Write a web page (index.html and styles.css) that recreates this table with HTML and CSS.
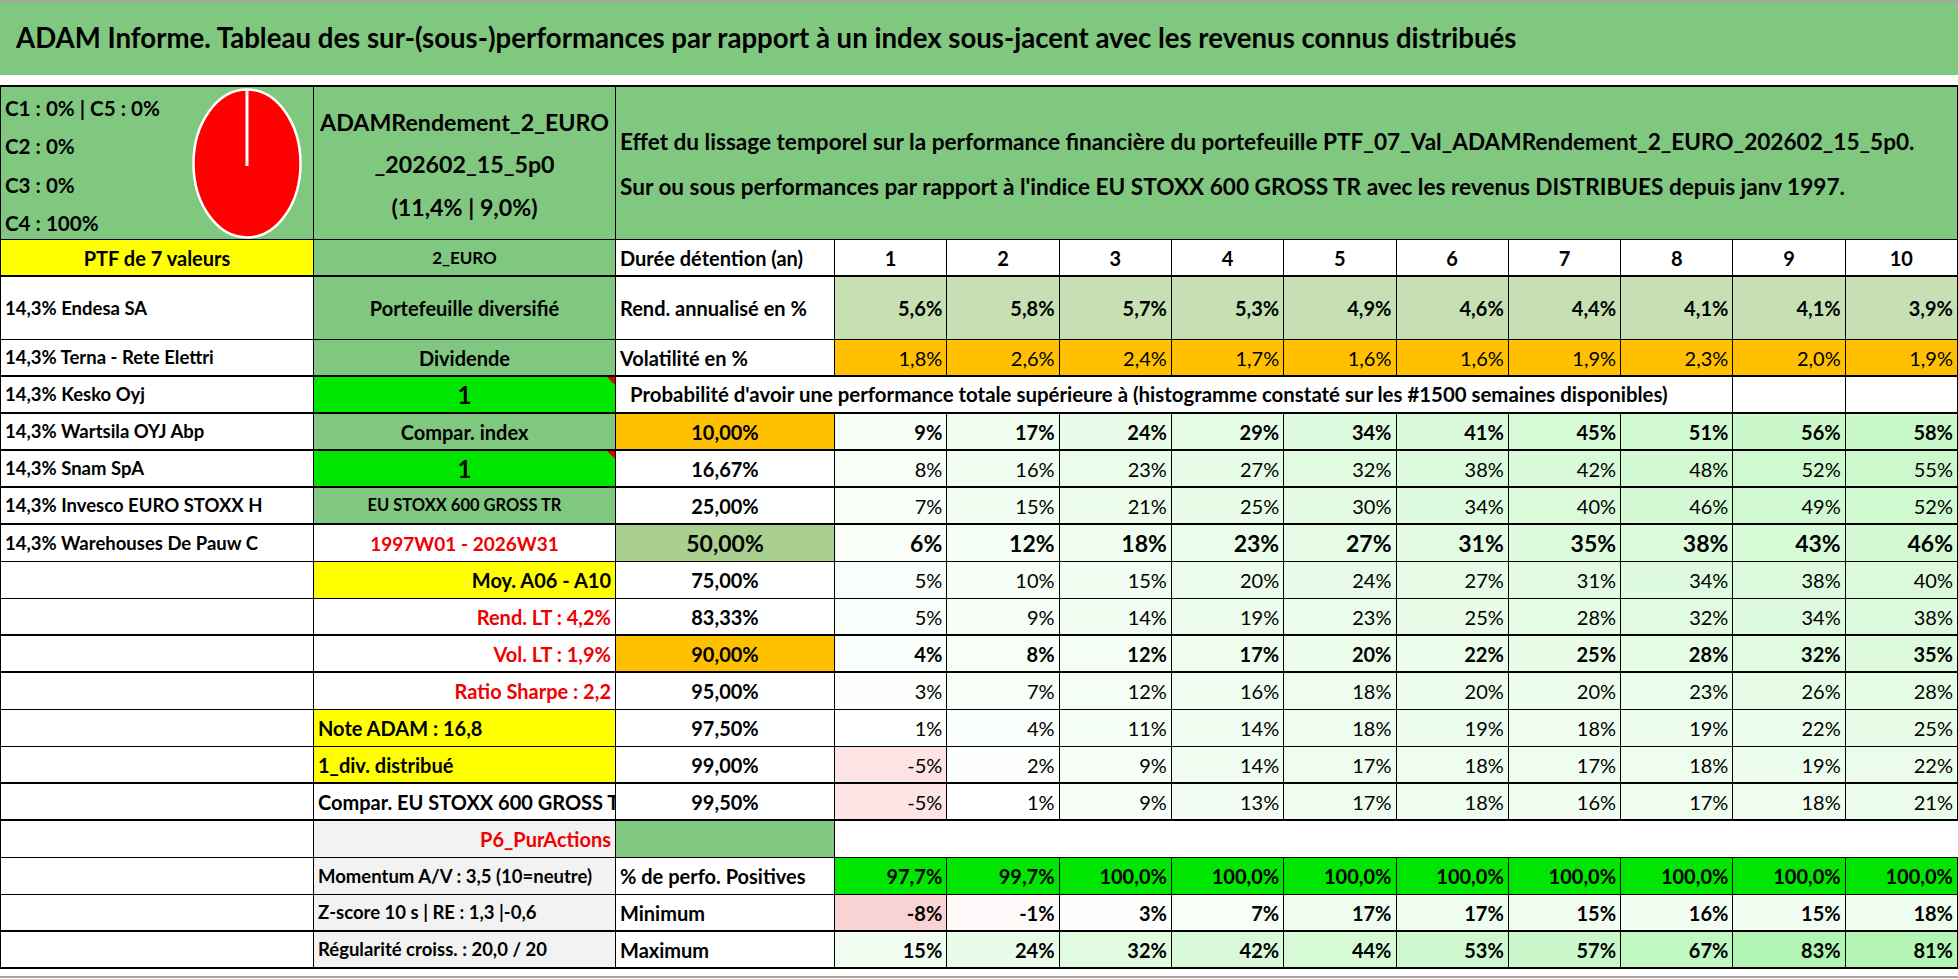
FILE: index.html
```html
<!DOCTYPE html>
<html lang="fr">
<head>
<meta charset="utf-8">
<title>ADAM Informe</title>
<link rel="stylesheet" href="styles.css">
</head>
<body>
<div class="topline"></div>
<header class="title">ADAM Informe. Tableau des sur-(sous-)performances par rapport à un index sous-jacent avec les revenus connus distribués</header>
<div class="gap"></div>
<main class="sheet">
  <div class="row first thin">
    <div class="c green cellA">
      <div class="clist">
        <div>C1 : 0% | C5 : 0%</div>
        <div>C2 : 0%</div>
        <div>C3 : 0%</div>
        <div>C4 : 100%</div>
      </div>
      <svg class="pie" width="110" height="151" viewBox="0 0 110 151">
        <ellipse cx="55" cy="75.5" rx="53.5" ry="74" fill="#ff0000" stroke="#ffffff" stroke-width="2.5"/>
        <line x1="55" y1="78" x2="55" y2="2" stroke="#ffffff" stroke-width="3"/>
      </svg>
    </div>
    <div class="c green name">
      <div>ADAMRendement_2_EURO</div>
      <div>_202602_15_5p0</div>
      <div>(11,4% | 9,0%)</div>
    </div>
    <div class="c green effet span11">
      <div>Effet du lissage temporel sur la performance financière du portefeuille PTF_07_Val_ADAMRendement_2_EURO_202602_15_5p0.</div>
      <div>Sur ou sous performances par rapport à l'indice EU STOXX 600 GROSS TR avec les revenus DISTRIBUES depuis janv 1997.</div>
    </div>
  </div>

  <div class="row head">
    <div class="c m yellow">PTF de 7 valeurs</div>
    <div class="c m green small">2_EURO</div>
    <div class="c l">Durée détention (an)</div>
    <div class="c m">1</div><div class="c m">2</div><div class="c m">3</div><div class="c m">4</div><div class="c m">5</div>
    <div class="c m">6</div><div class="c m">7</div><div class="c m">8</div><div class="c m">9</div><div class="c m">10</div>
  </div>

  <div class="row rend thin">
    <div class="c l a">14,3% Endesa SA</div>
    <div class="c m green">Portefeuille diversifié</div>
    <div class="c l">Rend. annualisé en %</div>
    <div class="c r lg">5,6%</div><div class="c r lg">5,8%</div><div class="c r lg">5,7%</div><div class="c r lg">5,3%</div><div class="c r lg">4,9%</div>
    <div class="c r lg">4,6%</div><div class="c r lg">4,4%</div><div class="c r lg">4,1%</div><div class="c r lg">4,1%</div><div class="c r lg">3,9%</div>
  </div>

  <div class="row lt">
    <div class="c l a">14,3% Terna - Rete Elettri</div>
    <div class="c m green">Dividende</div>
    <div class="c l">Volatilité en %</div>
    <div class="c r orange">1,8%</div><div class="c r orange">2,6%</div><div class="c r orange">2,4%</div><div class="c r orange">1,7%</div><div class="c r orange">1,6%</div>
    <div class="c r orange">1,6%</div><div class="c r orange">1,9%</div><div class="c r orange">2,3%</div><div class="c r orange">2,0%</div><div class="c r orange">1,9%</div>
  </div>

  <div class="row">
    <div class="c l a">14,3% Kesko Oyj</div>
    <div class="c m lime one flag">1</div>
    <div class="c l prob span9">Probabilité d'avoir une performance totale supérieure à (histogramme constaté sur les #1500 semaines disponibles)</div>
    <div class="c"></div>
    <div class="c"></div>
  </div>

  <div class="row">
    <div class="c l a">14,3% Wartsila OYJ Abp</div>
    <div class="c m green">Compar. index</div>
    <div class="c m orange">10,00%</div>
    <div class="c r g" style="--v:9">9%</div><div class="c r g" style="--v:17">17%</div><div class="c r g" style="--v:24">24%</div><div class="c r g" style="--v:29">29%</div><div class="c r g" style="--v:34">34%</div>
    <div class="c r g" style="--v:41">41%</div><div class="c r g" style="--v:45">45%</div><div class="c r g" style="--v:51">51%</div><div class="c r g" style="--v:56">56%</div><div class="c r g" style="--v:58">58%</div>
  </div>

  <div class="row lt">
    <div class="c l a">14,3% Snam SpA</div>
    <div class="c m lime one flag">1</div>
    <div class="c m pc">16,67%</div>
    <div class="c r g" style="--v:8">8%</div><div class="c r g" style="--v:16">16%</div><div class="c r g" style="--v:23">23%</div><div class="c r g" style="--v:27">27%</div><div class="c r g" style="--v:32">32%</div>
    <div class="c r g" style="--v:38">38%</div><div class="c r g" style="--v:42">42%</div><div class="c r g" style="--v:48">48%</div><div class="c r g" style="--v:52">52%</div><div class="c r g" style="--v:55">55%</div>
  </div>

  <div class="row lt">
    <div class="c l a">14,3% Invesco EURO STOXX H</div>
    <div class="c m green smaller">EU STOXX 600 GROSS TR</div>
    <div class="c m pc">25,00%</div>
    <div class="c r g" style="--v:7">7%</div><div class="c r g" style="--v:15">15%</div><div class="c r g" style="--v:21">21%</div><div class="c r g" style="--v:25">25%</div><div class="c r g" style="--v:30">30%</div>
    <div class="c r g" style="--v:34">34%</div><div class="c r g" style="--v:40">40%</div><div class="c r g" style="--v:46">46%</div><div class="c r g" style="--v:49">49%</div><div class="c r g" style="--v:52">52%</div>
  </div>

  <div class="row thin large">
    <div class="c l a">14,3% Warehouses De Pauw C</div>
    <div class="c m red period">1997W01 - 2026W31</div>
    <div class="c m mid">50,00%</div>
    <div class="c r g" style="--v:6">6%</div><div class="c r g" style="--v:12">12%</div><div class="c r g" style="--v:18">18%</div><div class="c r g" style="--v:23">23%</div><div class="c r g" style="--v:27">27%</div>
    <div class="c r g" style="--v:31">31%</div><div class="c r g" style="--v:35">35%</div><div class="c r g" style="--v:38">38%</div><div class="c r g" style="--v:43">43%</div><div class="c r g" style="--v:46">46%</div>
  </div>

  <div class="row thin lt">
    <div class="c"></div>
    <div class="c r yellow">Moy. A06 - A10</div>
    <div class="c m pc">75,00%</div>
    <div class="c r g" style="--v:5">5%</div><div class="c r g" style="--v:10">10%</div><div class="c r g" style="--v:15">15%</div><div class="c r g" style="--v:20">20%</div><div class="c r g" style="--v:24">24%</div>
    <div class="c r g" style="--v:27">27%</div><div class="c r g" style="--v:31">31%</div><div class="c r g" style="--v:34">34%</div><div class="c r g" style="--v:38">38%</div><div class="c r g" style="--v:40">40%</div>
  </div>

  <div class="row lt">
    <div class="c"></div>
    <div class="c r red">Rend. LT : 4,2%</div>
    <div class="c m pc">83,33%</div>
    <div class="c r g" style="--v:5">5%</div><div class="c r g" style="--v:9">9%</div><div class="c r g" style="--v:14">14%</div><div class="c r g" style="--v:19">19%</div><div class="c r g" style="--v:23">23%</div>
    <div class="c r g" style="--v:25">25%</div><div class="c r g" style="--v:28">28%</div><div class="c r g" style="--v:32">32%</div><div class="c r g" style="--v:34">34%</div><div class="c r g" style="--v:38">38%</div>
  </div>

  <div class="row">
    <div class="c"></div>
    <div class="c r red">Vol. LT : 1,9%</div>
    <div class="c m orange">90,00%</div>
    <div class="c r g" style="--v:4">4%</div><div class="c r g" style="--v:8">8%</div><div class="c r g" style="--v:12">12%</div><div class="c r g" style="--v:17">17%</div><div class="c r g" style="--v:20">20%</div>
    <div class="c r g" style="--v:22">22%</div><div class="c r g" style="--v:25">25%</div><div class="c r g" style="--v:28">28%</div><div class="c r g" style="--v:32">32%</div><div class="c r g" style="--v:35">35%</div>
  </div>

  <div class="row thin lt">
    <div class="c"></div>
    <div class="c r red">Ratio Sharpe : 2,2</div>
    <div class="c m pc">95,00%</div>
    <div class="c r g" style="--v:3">3%</div><div class="c r g" style="--v:7">7%</div><div class="c r g" style="--v:12">12%</div><div class="c r g" style="--v:16">16%</div><div class="c r g" style="--v:18">18%</div>
    <div class="c r g" style="--v:20">20%</div><div class="c r g" style="--v:20">20%</div><div class="c r g" style="--v:23">23%</div><div class="c r g" style="--v:26">26%</div><div class="c r g" style="--v:28">28%</div>
  </div>

  <div class="row thin lt">
    <div class="c"></div>
    <div class="c l yellow">Note ADAM : 16,8</div>
    <div class="c m pc">97,50%</div>
    <div class="c r g" style="--v:1">1%</div><div class="c r g" style="--v:4">4%</div><div class="c r g" style="--v:11">11%</div><div class="c r g" style="--v:14">14%</div><div class="c r g" style="--v:18">18%</div>
    <div class="c r g" style="--v:19">19%</div><div class="c r g" style="--v:18">18%</div><div class="c r g" style="--v:19">19%</div><div class="c r g" style="--v:22">22%</div><div class="c r g" style="--v:25">25%</div>
  </div>

  <div class="row lt">
    <div class="c"></div>
    <div class="c l yellow">1_div. distribué</div>
    <div class="c m pc">99,00%</div>
    <div class="c r n" style="--v:5">-5%</div><div class="c r g" style="--v:2">2%</div><div class="c r g" style="--v:9">9%</div><div class="c r g" style="--v:14">14%</div><div class="c r g" style="--v:17">17%</div>
    <div class="c r g" style="--v:18">18%</div><div class="c r g" style="--v:17">17%</div><div class="c r g" style="--v:18">18%</div><div class="c r g" style="--v:19">19%</div><div class="c r g" style="--v:22">22%</div>
  </div>

  <div class="row lt">
    <div class="c"></div>
    <div class="c l">Compar. EU STOXX 600 GROSS TR</div>
    <div class="c m pc">99,50%</div>
    <div class="c r n" style="--v:5">-5%</div><div class="c r g" style="--v:1">1%</div><div class="c r g" style="--v:9">9%</div><div class="c r g" style="--v:13">13%</div><div class="c r g" style="--v:17">17%</div>
    <div class="c r g" style="--v:18">18%</div><div class="c r g" style="--v:16">16%</div><div class="c r g" style="--v:17">17%</div><div class="c r g" style="--v:18">18%</div><div class="c r g" style="--v:21">21%</div>
  </div>

  <div class="row thin">
    <div class="c"></div>
    <div class="c r red gray">P6_PurActions</div>
    <div class="c green"></div>
    <div class="c blank span10"></div>
  </div>

  <div class="row thin">
    <div class="c"></div>
    <div class="c l gray sm">Momentum A/V : 3,5 (10=neutre)</div>
    <div class="c l">% de perfo. Positives</div>
    <div class="c r lime">97,7%</div><div class="c r lime">99,7%</div><div class="c r lime">100,0%</div><div class="c r lime">100,0%</div><div class="c r lime">100,0%</div>
    <div class="c r lime">100,0%</div><div class="c r lime">100,0%</div><div class="c r lime">100,0%</div><div class="c r lime">100,0%</div><div class="c r lime">100,0%</div>
  </div>

  <div class="row">
    <div class="c"></div>
    <div class="c l gray sm">Z-score 10 s | RE : 1,3 |-0,6</div>
    <div class="c l">Minimum</div>
    <div class="c r n" style="--v:8">-8%</div><div class="c r n" style="--v:1">-1%</div><div class="c r g" style="--v:3">3%</div><div class="c r g" style="--v:7">7%</div><div class="c r g" style="--v:17">17%</div>
    <div class="c r g" style="--v:17">17%</div><div class="c r g" style="--v:15">15%</div><div class="c r g" style="--v:16">16%</div><div class="c r g" style="--v:15">15%</div><div class="c r g" style="--v:18">18%</div>
  </div>

  <div class="row">
    <div class="c"></div>
    <div class="c l gray sm">Régularité croiss. : 20,0 / 20</div>
    <div class="c l">Maximum</div>
    <div class="c r g" style="--v:15">15%</div><div class="c r g" style="--v:24">24%</div><div class="c r g" style="--v:32">32%</div><div class="c r g" style="--v:42">42%</div><div class="c r g" style="--v:44">44%</div>
    <div class="c r g" style="--v:53">53%</div><div class="c r g" style="--v:57">57%</div><div class="c r g" style="--v:67">67%</div><div class="c r g" style="--v:83">83%</div><div class="c r g" style="--v:81">81%</div>
  </div>
</main>
<div class="foot"></div>
</body>
</html>
```

FILE: styles.css
```css
* { box-sizing: border-box; margin: 0; padding: 0; }

html, body { background: #ffffff; }

body {
  width: 1958px;
  height: 979px;
  overflow: hidden;
  font-family: Lato, "Liberation Sans", sans-serif;
  font-weight: 700;
  color: #000000;
}

.topline { height: 2px; background: #a6a6a6; }

.title {
  height: 73px;
  background: #80c880;
  display: flex;
  align-items: center;
  padding-left: 16px;
  padding-bottom: 2px;
  font-size: 27.6px;
  white-space: nowrap;
}

.gap { height: 10px; }

.sheet {
  width: 1958px;
  border-left: 1px solid #000000;
}

.row {
  display: grid;
  grid-template-columns: 313px 302px 219px repeat(10, 1fr);
  height: 37px;
  border-bottom: 2px solid #000000;
}
.row.thin { border-bottom-width: 1px; }
.row.first { height: 155px; border-top: 2px solid #000000; }
.row.rend { height: 63px; }

.c {
  border-right: 1px solid #000000;
  display: flex;
  align-items: center;
  overflow: hidden;
  white-space: nowrap;
  position: relative;
  font-size: 20px;
  line-height: 1;
}
.l { justify-content: flex-start; padding-left: 4px; }
.r { justify-content: flex-end; padding-right: 4px; }
.m { justify-content: center; }

.span11 { grid-column: span 11; }
.span10 { grid-column: span 10; }
.span9 { grid-column: span 9; }

.green { background: #80c880; }
.yellow { background: #ffff00; }
.orange { background: #ffc000; }
.lime { background: #00e600; }
.lg { background: #c6e0b4; }
.mid { background: #a9d08e; }
.gray { background: #f2f2f2; }
.red { color: #f00000; }

.g {
  background: rgb(calc(255 - var(--v) * 0.93), calc(255 - var(--v) * 0.12), calc(255 - var(--v) * 0.93));
}
.n {
  background: rgb(calc(255 - var(--v) * 0.7), calc(255 - var(--v) * 5.5), calc(255 - var(--v) * 5.5));
}

.a { font-size: 18.5px; }
.small { font-size: 17px; }
.smaller { font-size: 16.5px; }
.sm { font-size: 18.5px; }
.one { font-size: 24px; }
.large .c { font-size: 23px; }
.large .c.a { font-size: 18.5px; }
.large .c.period { font-size: 19px; }

.lt .c.r:not(.red):not(.yellow) { font-weight: 400; }

.blank { border-right: none; }

.flag::after {
  content: "";
  position: absolute;
  top: 0;
  right: 0;
  border-top: 8px solid #e00000;
  border-left: 8px solid transparent;
}

.prob { padding-left: 14px; font-size: 20.4px; }

.cellA {
  justify-content: space-between;
  align-items: center;
  padding-left: 4px;
  padding-right: 11px;
}
.clist {
  align-self: flex-start;
  padding-top: 2px;
  line-height: 38.3px;
  font-size: 20.6px;
}
.pie { display: block; }

.name {
  flex-direction: column;
  justify-content: center;
  align-items: center;
  font-size: 23.2px;
  line-height: 42.5px;
  padding-top: 3px;
}

.effet {
  flex-direction: column;
  justify-content: center;
  align-items: flex-start;
  padding-left: 4px;
  font-size: 22.6px;
  line-height: 45px;
  padding-top: 2px;
}

.foot {
  margin-top: 7px;
  height: 2px;
  background: #a6a6a6;
}
```
